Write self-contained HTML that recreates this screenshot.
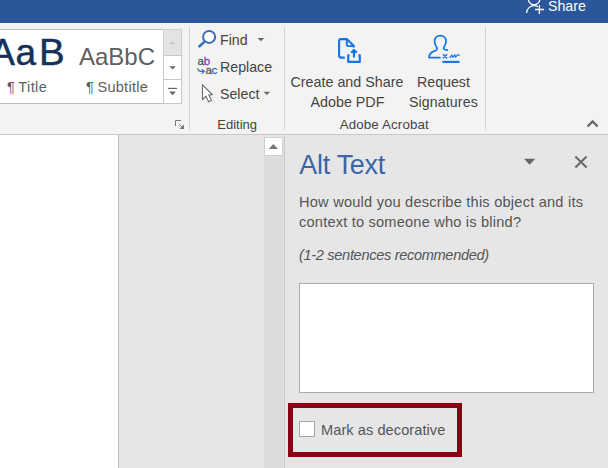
<!DOCTYPE html>
<html lang="en">
<head>
<meta charset="utf-8">
<title>Alt Text</title>
<style>
html,body{margin:0;padding:0;}
body{width:608px;height:468px;overflow:hidden;position:relative;background:#e6e6e6;font-family:"Liberation Sans",sans-serif;color:#444;}
.abs{position:absolute;}
.t{position:absolute;white-space:nowrap;line-height:1;transform-origin:0 0;}
.p{color:#555;}
#titlebar{left:0;top:0;width:608px;height:22.5px;background:#2b579a;}
#ribbon{left:0;top:22.5px;width:608px;height:111.5px;background:#f3f3f3;}
#ribbonline{left:0;top:134px;width:608px;height:1px;background:#c8c8c8;}
#gallery{left:-2px;top:29px;width:182px;height:73px;border:1px solid #bdbdbd;background:#fff;}
.sbtn{position:absolute;left:163px;width:17px;border:1px solid #c8c8c8;background:#fff;}
.sep{position:absolute;width:1px;background:#d4d4d4;top:27px;height:103px;}
#page{left:0;top:135px;width:118px;height:333px;background:#fff;}
#pageline{left:118px;top:135px;width:1px;height:333px;background:#bcbcbc;}
#track{left:264px;top:137px;width:19px;height:331px;background:#dcdcdc;}
#upbtn{left:264px;top:137px;width:17px;height:17px;border:1px solid #cfcfcf;background:#fff;}
#paneline{left:284px;top:136px;width:1px;height:332px;background:#c4c4c4;}
#ta{left:299px;top:283px;width:293px;height:108px;border:1px solid #ababab;background:#fff;}
#redbox{left:288px;top:403px;width:164px;height:44px;border:5px solid #8a0015;}
#cb{left:299px;top:421px;width:14px;height:14px;border:1px solid #a6a6a6;background:#fff;}
</style>
</head>
<body>
<div id="titlebar" class="abs"></div>
<div id="ribbon" class="abs"></div>
<div id="ribbonline" class="abs"></div>

<!-- share -->
<svg class="abs" style="left:520px;top:0;" width="30" height="23" viewBox="520 0 30 23" fill="none" stroke="#fff" stroke-width="1.3">
  <circle cx="534.1" cy="-0.9" r="5.7"/>
  <path d="M526.5 12.8 C527.2 8.6 530.2 5.6 534.1 5.6 C535.6 5.6 536.9 6 537.9 6.7"/>
  <path d="M535 9.5 H544 M539.4 5.1 V13.9"/>
</svg>
<span id="share" class="t" style="left:548px;top:-1px;font-size:14.2px;color:#fff;">Share</span>

<!-- style gallery -->
<div id="gallery" class="abs"></div>
<span id="aab" class="t" style="left:-9.8px;top:34px;font-size:37px;color:#14315a;-webkit-text-stroke:0.45px #14315a;"><span style="letter-spacing:0.7px">A</span><span style="letter-spacing:2.9px">a</span><span style="display:inline-block;transform:scaleX(1.04);transform-origin:0 0;">B</span></span>
<span id="ttl" class="t" style="left:7px;top:79.6px;font-size:14.6px;letter-spacing:0.4px;word-spacing:-1.2px;color:#5e5e5e;">¶ Title</span>
<span id="aabbc" class="t" style="left:79px;top:44.5px;font-size:24px;color:#5f5f5f;">AaBbC</span>
<span id="sub" class="t" style="left:86px;top:79.6px;font-size:14.6px;letter-spacing:0.25px;word-spacing:-1px;color:#5e5e5e;">¶ Subtitle</span>
<div class="sbtn" style="top:29px;height:25px;background:#e3e3e3;border-color:#d0d0d0;"></div>
<div class="sbtn" style="top:55px;height:23px;"></div>
<div class="sbtn" style="top:79px;height:23px;"></div>
<svg class="abs" style="left:163px;top:29px;" width="19" height="75" viewBox="163 29 19 75">
  <path d="M169.4 44.2 L172.4 41.2 L175.4 44.2 Z" fill="#c6c6c6"/>
  <path d="M169.4 66.3 L175.8 66.3 L172.6 69.5 Z" fill="#666"/>
  <path d="M168 87.8 H177 V89 H168 Z" fill="#666"/>
  <path d="M169.2 91.5 L175.8 91.5 L172.5 95.2 Z" fill="#666"/>
</svg>
<!-- dialog launcher -->
<svg class="abs" style="left:174px;top:119px;" width="12" height="12" viewBox="174 119 12 12" fill="none" stroke="#777" stroke-width="1">
  <path d="M175.5 126 V120.5 H181"/>
  <path d="M179.3 124.3 L183.5 128.5"/>
  <path d="M184 124.5 V129 H179.5 Z" fill="#777" stroke="none"/>
</svg>

<div class="sep" style="left:189px;"></div>
<div class="sep" style="left:284px;"></div>
<div class="sep" style="left:485px;"></div>

<!-- Editing group -->
<svg class="abs" style="left:195px;top:28px;" width="26" height="76" viewBox="195 28 26 76">
  <circle cx="209.1" cy="36.9" r="6" fill="#fff" stroke="#3a6db5" stroke-width="2"/>
  <path d="M204.6 41.6 L198.7 47" stroke="#3a6db5" stroke-width="2.5" stroke-linecap="butt" fill="none"/>
  <path d="M197.6 68.2 Q198 71.4 201 71.4 H204" fill="none" stroke="#3a6db5" stroke-width="1.2"/>
  <path d="M201.8 69.2 L204.3 71.4 L201.8 73.6" fill="none" stroke="#3a6db5" stroke-width="1.2"/>
  <path d="M202.5 84.9 V99.5 L205.9 96.4 L208.7 101.7 L211.5 100.3 L208.9 95 L212.3 94.6 Z" fill="#fff" stroke="#6a6a6a" stroke-width="1.1" stroke-linejoin="miter"/>
</svg>
<span class="t" style="left:197.5px;top:55.9px;font-size:11.5px;color:#555;letter-spacing:-0.25px;-webkit-text-stroke:0.3px;">a<span style="color:#8e44ad">b</span></span>
<span class="t" style="left:205.5px;top:64.9px;font-size:11.5px;color:#555;letter-spacing:-0.4px;-webkit-text-stroke:0.3px;">a<span style="color:#3a6db5">c</span></span>
<span id="find" class="t" style="left:220px;top:32.5px;font-size:14.2px;">Find</span>
<span id="replace" class="t" style="left:220px;top:59.5px;font-size:14.2px;">Replace</span>
<span id="select" class="t" style="left:220px;top:86.5px;font-size:14.2px;">Select</span>
<svg class="abs" style="left:255px;top:34px;" width="20" height="64" viewBox="255 34 20 64">
  <path d="M257.6 37.9 H264.2 L260.9 41.2 Z" fill="#666"/>
  <path d="M263.6 91.8 H270.2 L266.9 95.1 Z" fill="#666"/>
</svg>
<span id="editing" class="t" style="left:217.3px;top:117.8px;font-size:13px;">Editing</span>

<!-- Adobe group -->
<svg class="abs" style="left:334px;top:34px;" width="32" height="32" viewBox="334 34 32 32" fill="none" stroke="#1473e6" stroke-width="2.1" stroke-linejoin="round" stroke-linecap="butt">
  <path d="M344.8 57.6 H341.2 Q339.1 57.6 339.1 55.5 V41.2 Q339.1 39.1 341.2 39.1 H346.8 L353.8 46.1 V47.6"/>
  <path d="M346.8 39.1 V44.3 Q346.8 46.1 348.6 46.1 H353.8" stroke-width="1.9"/>
  <path d="M349.6 55.4 H348.2 V61.9 H359.8 V55.4 H358.4"/>
  <path d="M353.95 57.6 V50.2 M351.2 52.7 L353.95 49.9 L356.7 52.7"/>
</svg>
<span id="cas" class="t" style="left:290.5px;top:75.1px;font-size:14.3px;">Create and Share</span>
<span id="apdf" class="t" style="left:310.5px;top:95.1px;font-size:14.3px;">Adobe PDF</span>
<svg class="abs" style="left:424px;top:32px;" width="40" height="34" viewBox="424 32 40 34" fill="none" stroke="#1473e6" stroke-width="1.7" stroke-linecap="round" stroke-linejoin="round">
  <path d="M440 57.6 H429 C429 53.4 432 51.6 435.4 50.6 C437.4 50 437.6 48.6 436.4 46.8 C435 44.8 434.6 43 434.6 41.2 C434.6 37.8 437 35.6 440.3 35.6 C443.6 35.6 446 37.8 446 41.2 C446 43 445.6 44.8 444.2 46.8 C443 48.6 443.4 49.6 447.4 50.2"/>
  <path d="M443.3 54.5 L446.7 58 M446.7 54.5 L443.3 58" stroke-width="1.3"/>
  <path d="M449.8 57.6 L451.8 55 L452.6 57.4 L454.8 54.8 L455.6 57.2 L457.8 54.6 L459.3 55.2" stroke-width="1.2"/>
  <path d="M442.4 61.9 H459.5" stroke-width="2.1" stroke-linecap="butt"/>
</svg>
<span id="req" class="t" style="left:417px;top:75.1px;font-size:14.2px;">Request</span>
<span id="sig" class="t" style="left:409px;top:95.1px;font-size:14.2px;letter-spacing:0.1px;">Signatures</span>
<span id="aa" class="t" style="left:339.7px;top:117.8px;font-size:13.3px;letter-spacing:0.15px;">Adobe Acrobat</span>

<!-- collapse chevron -->
<svg class="abs" style="left:584px;top:116px;" width="18" height="14" viewBox="584 116 18 14" fill="none" stroke="#666" stroke-width="2.2">
  <path d="M587.6 126.6 L592.6 121.4 L597.6 126.6"/>
</svg>

<!-- document area -->
<div id="page" class="abs"></div>
<div id="pageline" class="abs"></div>
<div id="track" class="abs"></div>
<div id="upbtn" class="abs"></div>
<svg class="abs" style="left:266px;top:141px;" width="15" height="11" viewBox="266 141 15 11">
  <path d="M268.7 149 L273.4 143.9 L278.1 149 Z" fill="#777"/>
</svg>
<div id="paneline" class="abs"></div>

<!-- Alt text pane -->
<span id="alt" class="t" style="left:299.3px;top:151.6px;font-size:26.9px;letter-spacing:-0.25px;color:#3b65a5;">Alt Text</span>
<svg class="abs" style="left:520px;top:152px;" width="72" height="20" viewBox="520 152 72 20">
  <path d="M524 158.8 H535.2 L529.6 164.8 Z" fill="#666"/>
  <path d="M575.4 156.4 L586.6 167.6 M586.6 156.4 L575.4 167.6" stroke="#6a6a6a" stroke-width="2.1" fill="none"/>
</svg>
<span id="l1" class="t p" style="left:299px;top:194.7px;font-size:14.6px;letter-spacing:0.22px;">How would you describe this object and its</span>
<span id="l2" class="t p" style="left:299px;top:214.7px;font-size:14.6px;letter-spacing:0.2px;">context to someone who is blind?</span>
<span id="l3" class="t p" style="left:299px;top:247.6px;font-size:14.6px;letter-spacing:-0.33px;font-style:italic;">(1-2 sentences recommended)</span>
<div id="ta" class="abs"></div>
<div id="redbox" class="abs"></div>
<div id="cb" class="abs"></div>
<span id="mark" class="t p" style="left:321px;top:423px;font-size:14.6px;letter-spacing:0.06px;">Mark as decorative</span>
</body>
</html>
